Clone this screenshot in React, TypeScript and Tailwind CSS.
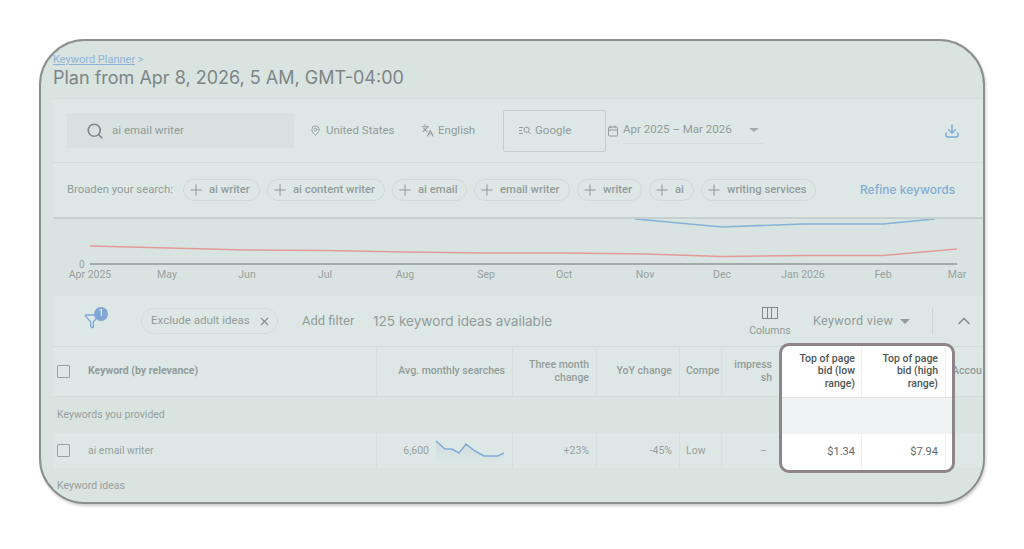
import { Calendar, ChevronUp, Download, Filter, Languages, MapPin, Plus, Search, X } from 'lucide-react';

const chips = [
  { label: 'ai writer', w: 'w-[77px]' },
  { label: 'ai content writer', w: 'w-[118px]' },
  { label: 'ai email', w: 'w-[75px]' },
  { label: 'email writer', w: 'w-[96px]' },
  { label: 'writer', w: 'w-[65px]' },
  { label: 'ai', w: 'w-[45px]' },
  { label: 'writing services', w: 'w-[115px]' },
];

const months = [
  { label: 'Apr 2025', w: 'w-[74px]' },
  { label: 'May', w: 'w-[80px]' },
  { label: 'Jun', w: 'w-[80px]' },
  { label: 'Jul', w: 'w-[76px]' },
  { label: 'Aug', w: 'w-[84px]' },
  { label: 'Sep', w: 'w-[78px]' },
  { label: 'Oct', w: 'w-[78px]' },
  { label: 'Nov', w: 'w-[84px]' },
  { label: 'Dec', w: 'w-[70px]' },
  { label: 'Jan 2026', w: 'w-[92px]' },
  { label: 'Feb', w: 'w-[68px]' },
  { label: 'Mar', w: 'w-[80px]' },
];

const cols = 'grid grid-cols-[324px_136px_84px_83px_42px_58px_81px_84px_39px]';
const sparkline = 'M1 3 L10 11 L17 11 L24 15 L31 6 L40 13 L49 18 L58 18 L63 18 L69 15';

function Checkbox() {
  return <span className="block h-[13px] w-[13px] rounded-[1px] border border-[#98a09f]" />;
}

export default function App() {
  return (
    <div className="h-[549px] w-[1024px] bg-white px-[39px] pt-[39px] font-['Roboto',sans-serif]">
      <div className="relative h-[465px] w-[946px] rounded-[46px] border-2 border-[#8b8f8e] bg-[#d9e3e0] shadow-[1px_2px_3px_rgba(0,0,0,0.2)]">
        <div className="flex h-full flex-col overflow-hidden rounded-[44px] pl-[12px] text-[#9aa3a2]">
          {/* title */}
          <div className="h-[57px] shrink-0 pt-[12px]">
            <div className="text-[11px] leading-[13px]">
              <span className="text-[#8db4d8] underline">Keyword Planner</span>
              <span className="text-[#8db4d8]"> &gt;</span>
            </div>
            <h1 className="-mt-[1px] font-['Inter',sans-serif] text-[18px] leading-[26px] font-normal text-[#7d8686]">
              Plan from Apr 8, 2026, 5 AM, GMT-04:00
            </h1>
          </div>

          {/* search bar */}
          <div className="flex h-[64px] shrink-0 items-center border-t border-[#d3dddb] bg-[#dde7e5] pl-[14px] text-[11.5px] text-[#939c9b]">
            <div className="flex h-[35px] w-[227px] items-center rounded-[2px] bg-[#d7e1df] pl-[19px]">
              <Search size={18} strokeWidth={2.2} className="text-[#7f8988]" />
              <span className="ml-[8px]">ai email writer</span>
            </div>
            <MapPin size={11} className="ml-[16px]" />
            <span className="ml-[5px] w-[68px] whitespace-nowrap">United States</span>
            <Languages size={13} className="ml-[27px]" />
            <span className="ml-[4px] w-[38px]">English</span>
            <div className="ml-[27px] flex h-[42px] w-[103px] items-center rounded-[2px] border border-[#c5cfcd] pl-[15px]">
              <svg width="12" height="9" viewBox="0 0 12 9" fill="none" stroke="#939c9b" strokeWidth="1">
                <path d="M0 1.5H4M0 4.5H3M0 7.5H4" />
                <circle cx="7.5" cy="3.8" r="2.6" />
                <path d="M9.5 5.8L11.5 8" />
              </svg>
              <span className="ml-[4px] text-[11.5px]">Google</span>
            </div>
            <Calendar size={12} className="ml-[1px]" />
            <div className="ml-[4px] flex h-[26px] w-[140px] items-center border-b border-[#d3dddb]">
              <span className="w-[126px] whitespace-nowrap">Apr 2025 – Mar 2026</span>
              <span className="h-0 w-0 border-x-[5px] border-t-[4px] border-x-transparent border-t-[#a3acab]" />
            </div>
            <Download size={16} strokeWidth={2.2} className="ml-[181px] text-[#7eaad6]" />
          </div>

          {/* broaden */}
          <div className="flex h-[57px] shrink-0 items-center border-t border-b-2 border-[#d3dddb] border-b-[#c6cfcd] bg-[#dde7e5] pl-[14px] text-[11.3px] text-[#949d9c]">
            <span className="mr-[10px] w-[106px] whitespace-nowrap">Broaden your search:</span>
            <div className="flex gap-[7px]">
              {chips.map((chip) => (
                <span
                  key={chip.label}
                  className={`flex h-[22px] items-center whitespace-nowrap rounded-full border border-[#d0dad8] pl-[3px] font-medium ${chip.w}`}
                >
                  <Plus size={18} strokeWidth={1.2} className="mr-[4px] text-[#858f8e]" />
                  {chip.label}
                </span>
              ))}
            </div>
            <span className="ml-[44px] font-['Inter',sans-serif] text-[12px] font-medium whitespace-nowrap text-[#84add6]">
              Refine keywords
            </span>
          </div>

          {/* chart */}
          <div className="h-[77px] shrink-0 bg-[#d9e3e1]">
            <svg width="932" height="50" viewBox="0 0 932 50" className="block">
              <path d="M582 0 L669 8 L750 5 L830 5 L882 0" fill="none" stroke="#86b3d8" strokeWidth="1.7" />
              <path
                d="M37 27 L194 31 L272 31.5 L352 33 L433 34 L511 34 L592 35 L669 37.5 L750 36.5 L830 36.5 L904 30"
                fill="none"
                stroke="#e39a9c"
                strokeWidth="1.5"
              />
              <path d="M37 45 H904" stroke="#a2abaa" strokeWidth="2" />
              <text x="26" y="49" fontSize="10" fill="#98a1a0">0</text>
            </svg>
            <div className="-mt-[1px] flex text-center text-[10.5px] leading-[13px] text-[#98a1a0]">
              {months.map((m) => (
                <span key={m.label} className={`shrink-0 whitespace-nowrap ${m.w}`}>
                  {m.label}
                </span>
              ))}
            </div>
          </div>

          {/* filters */}
          <div className="flex h-[50px] shrink-0 items-center bg-[#dde7e5] text-[#939c9b]">
            <span className="relative ml-[31px]">
              <Filter size={16} className="text-[#7eaad6]" />
              <span className="absolute -top-[6px] left-[10px] flex h-[14px] w-[14px] items-center justify-center rounded-full bg-[#7ea7d6] text-[9px] text-white">
                1
              </span>
            </span>
            <span className="ml-[41px] flex h-[26px] w-[137px] items-center rounded-full border border-[#d3dddb] pl-[9px] text-[11.5px] whitespace-nowrap">
              Exclude adult ideas
              <X size={13} className="ml-[8px] text-[#848e8d]" />
            </span>
            <span className="ml-[24px] w-[53px] text-[13px] whitespace-nowrap">Add filter</span>
            <span className="ml-[18px] w-[180px] font-['Inter',sans-serif] text-[13.6px] whitespace-nowrap">
              125 keyword ideas available
            </span>
            <div className="ml-[195px] flex w-[44px] flex-col items-center pt-[1px]">
              <span className="grid h-[12px] w-[16px] grid-cols-3 border border-[#7f8988]">
                <span className="border-r border-[#7f8988]" />
                <span className="border-r border-[#7f8988]" />
              </span>
              <span className="mt-[6px] text-[10.5px] leading-[12px]">Columns</span>
            </div>
            <span className="ml-[21px] w-[80px] text-[12.5px] tracking-[0.35px] whitespace-nowrap">Keyword view</span>
            <span className="ml-[7px] h-0 w-0 border-x-[5px] border-t-[5px] border-x-transparent border-t-[#939c9b]" />
            <span className="ml-[22px] h-[26px] w-px bg-[#ccd6d4]" />
            <ChevronUp size={20} className="ml-[21px] text-[#848e8d]" />
          </div>

          {/* table */}
          <div className={`${cols} h-[51px] shrink-0 border-t border-b border-[#d3dddb] bg-[#dde7e5] text-[10.5px] leading-[12.5px] font-medium text-[#939c9b]`}>
            <div className="flex items-center gap-[18px] border-r border-[#d6e0de] pl-[4px]">
              <Checkbox />
              <span className="font-bold">Keyword (by relevance)</span>
            </div>
            <div className="flex items-center justify-end border-r border-[#d6e0de] pr-[7px]">Avg. monthly searches</div>
            <div className="flex items-center justify-end border-r border-[#d6e0de] pr-[7px] text-right">
              Three month
              <br />
              change
            </div>
            <div className="flex items-center justify-end border-r border-[#d6e0de] pr-[7px]">YoY change</div>
            <div className="flex items-center border-r border-[#d6e0de] pl-[6px] whitespace-nowrap">Compe</div>
            <div className="flex items-center justify-end pr-[8px] text-right whitespace-nowrap">
              <span>
                impress
                <br />
                sh
              </span>
            </div>
            <div />
            <div />
            <div className="flex items-center pl-[7px] whitespace-nowrap">Accou</div>
          </div>
          <div className="flex h-[36px] shrink-0 items-center bg-[#d9e3e0] pl-[4px] text-[10.5px] text-[#98a1a0]">
            Keywords you provided
          </div>
          <div className={`${cols} h-[35px] shrink-0 bg-[#dde7e5] text-[10.5px] text-[#98a1a0]`}>
            <div className="flex items-center gap-[18px] border-r border-[#d6e0de] pl-[4px]">
              <Checkbox />
              <span>ai email writer</span>
            </div>
            <div className="flex items-center justify-end border-r border-[#d6e0de] pr-[7px]">
              <span className="mr-[6px]">6,600</span>
              <svg width="70" height="26" viewBox="0 0 70 26">
                <defs>
                  <linearGradient id="spark" x1="0" y1="0" x2="0" y2="1">
                    <stop offset="0" stopColor="#cfdbe2" />
                    <stop offset="1" stopColor="#dde7e5" />
                  </linearGradient>
                </defs>
                <path d={`${sparkline} V26 H1 Z`} fill="url(#spark)" />
                <path d={sparkline} fill="none" stroke="#84acd8" strokeWidth="1.5" />
              </svg>
            </div>
            <div className="flex items-center justify-end border-r border-[#d6e0de] pr-[7px]">+23%</div>
            <div className="flex items-center justify-end border-r border-[#d6e0de] pr-[7px]">-45%</div>
            <div className="flex items-center border-r border-[#d6e0de] pl-[6px]">Low</div>
            <div className="flex items-center justify-end pr-[13px]">–</div>
          </div>
          <div className="flex h-[35px] shrink-0 items-center bg-[#d9e3e0] pl-[4px] text-[10.5px] text-[#98a1a0]">
            Keyword ideas
          </div>
        </div>

        {/* highlighted bid columns */}
        <div className="absolute top-[302px] left-[738px] flex h-[130px] w-[176px] flex-col overflow-hidden rounded-[10px] border-[3px] border-[#8d8587] bg-white text-[10.5px] leading-[12.5px] text-[#4f5655]">
          <div className="grid h-[52px] grid-cols-[80px_84px_1fr] border-b border-[#dfe3e3] font-medium">
            <div className="flex items-center justify-end border-r border-[#eef0f0] pr-[6px] text-right">
              <span>
                Top of page
                <br />
                bid (low
                <br />
                range)
              </span>
            </div>
            <div className="flex items-center justify-end border-r border-[#eef0f0] pr-[7px] text-right">
              <span>
                Top of page
                <br />
                bid (high
                <br />
                range)
              </span>
            </div>
            <div />
          </div>
          <div className="h-[36px] bg-[#f1f2f3]" />
          <div className="grid flex-1 grid-cols-[80px_84px_1fr] text-[11px] text-[#626968]">
            <div className="flex items-center justify-end border-r border-[#eef0f0] pr-[6px]">$1.34</div>
            <div className="flex items-center justify-end border-r border-[#eef0f0] pr-[7px]">$7.94</div>
            <div />
          </div>
        </div>
      </div>
    </div>
  );
}
